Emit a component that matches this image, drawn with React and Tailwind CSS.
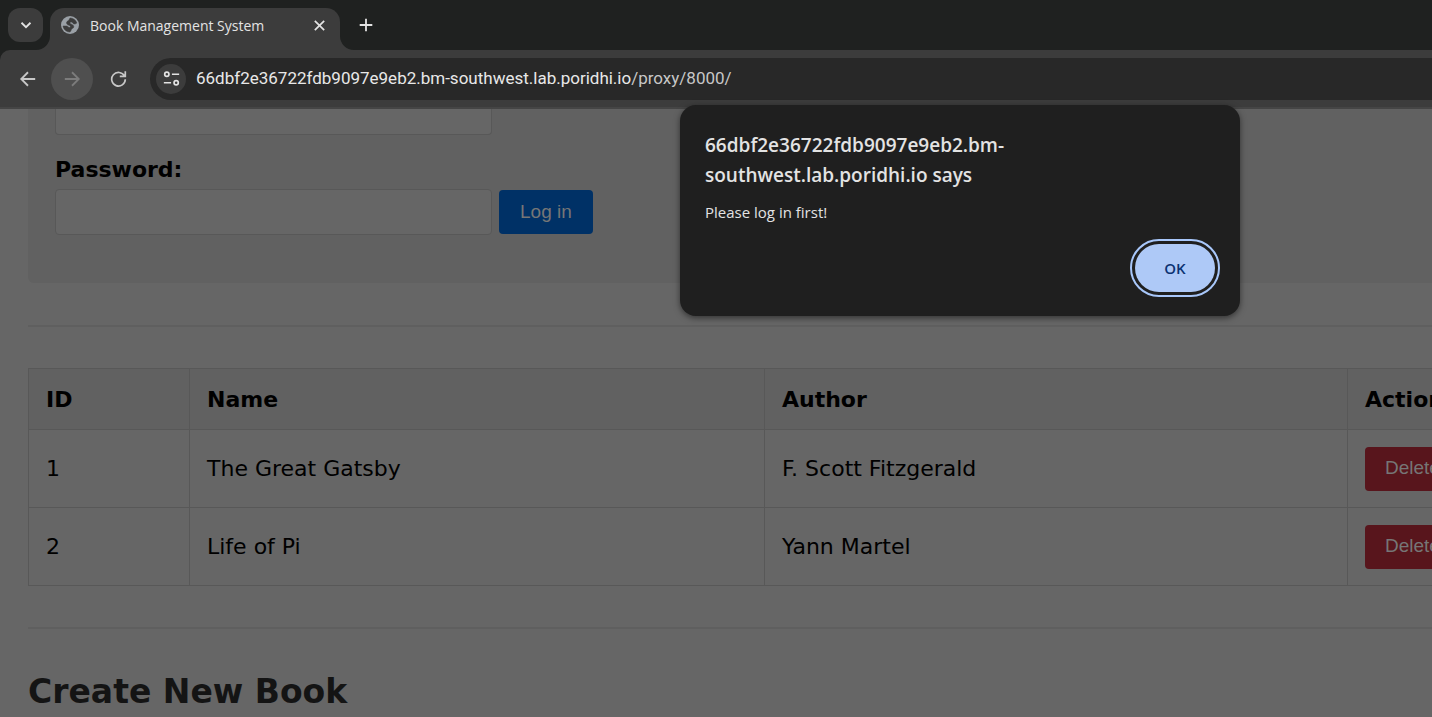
const books = [
  { id: 1, name: "The Great Gatsby", author: "F. Scott Fitzgerald" },
  { id: 2, name: "Life of Pi", author: "Yann Martel" },
];

function Stroke({ d, size = 20, className = "" }) {
  return (
    <svg width={size} height={size} viewBox="0 0 20 20" fill="none" stroke="currentColor" strokeWidth="2" className={className} aria-hidden="true">
      <path d={d} />
    </svg>
  );
}

function Globe() {
  return (
    <svg className="size-[18px]" viewBox="0 0 18 18" aria-hidden="true">
      <circle cx="9" cy="9" r="9" fill="#9aa0a6" />
      <g fill="#3c3c3c">
        <path d="M9.500 2C12.500 2.200 15 4.300 15.800 7C14.800 8 13.500 8.300 12.500 7.800C11.500 7.200 11.500 6 10.200 5.900C8.800 5.900 8.600 7.200 9.500 7.700C11 8.400 12.800 9 12.800 10.800C12.800 12.500 10.500 12.400 10.200 13.800C10 15 9.500 16 8.500 16C5.500 15.900 2.500 13.500 2 10H5.500C7 10 7.200 11.500 8.500 11.500C9.800 11.300 9.600 10 8.500 9.500C7 9 5.500 8.500 5.500 6.800C5.600 5 7.500 5 8 4C8.300 3.200 8.500 2.200 9.500 2z" stroke="#3c3c3c" strokeWidth="0.5" />
      </g>
    </svg>
  );
}

function TabStrip() {
  return (
    <div className="flex h-[50px] bg-[#1f2120] text-[#e3e3e3]">
      <button aria-label="Search tabs" className="mt-2 ml-2 flex h-[34px] w-[35px] items-center justify-center rounded-xl bg-[#3c3c3c]">
        <Stroke d="M5 7.500l5 5 5-5" size={18} />
      </button>
      <div className="relative mt-2 ml-[7px] flex w-[290px] items-center rounded-t-[14px] bg-[#3c3c3c] pr-3 pb-2 pl-[11px]">
        <svg className="absolute bottom-0 -left-3.5 size-3.5 text-[#3c3c3c]" viewBox="0 0 14 14" aria-hidden="true">
          <path d="M14 0v14H0A14 14 0 0 0 14 0z" fill="currentColor" />
        </svg>
        <svg className="absolute -right-3.5 bottom-0 size-3.5 text-[#3c3c3c]" viewBox="0 0 14 14" aria-hidden="true">
          <path d="M0 0v14h14A14 14 0 0 1 0 0z" fill="currentColor" />
        </svg>
        <Globe />
        <span className="ml-[11px] grow text-[14px] whitespace-nowrap">Book Management System</span>
        <button aria-label="Close tab">
          <Stroke d="M4.500 4.500l11 11M15.500 4.500l-11 11" size={17} />
        </button>
      </div>
      <button aria-label="New tab" className="ml-[17px] self-center">
        <Stroke d="M10 3v14M3 10h14" size={18} />
      </button>
    </div>
  );
}

function Toolbar() {
  return (
    <div className="bg-[#1f2120]">
      <div className="flex h-[59px] items-center rounded-tl-[10px] border-b-2 border-[#454545] bg-[#3c3c3c] pl-[7px] text-[#c7c7c7]">
        <button aria-label="Back" className="flex size-[42px] items-center justify-center">
          <Stroke d="M18 10H3M10 2.500L2.500 10l7.500 7.500" size={18} />
        </button>
        <button aria-label="Forward" className="ml-0.5 flex size-[42px] items-center justify-center rounded-full bg-[#4f4f4f] text-[#7c7c7c]">
          <Stroke d="M2 10h15M10 2.500l7.500 7.500-7.500 7.500" size={18} />
        </button>
        <button aria-label="Reload" className="ml-1 flex size-[42px] items-center justify-center">
          <Stroke d="M17 7A8 8 0 1 0 18 11M18 1.500V7.500H11.500" size={17} />
        </button>
        <div className="ml-[11px] flex h-[42px] grow items-center rounded-l-full bg-[#282828] pl-1.5">
          <button aria-label="Site information" className="flex size-[30px] items-center justify-center rounded-full bg-[#3c3c3c] text-[#e3e3e3]">
            <Stroke d="M10.500 5H19M1 15h8.500M4.500 2.500a2.500 2.500 0 1 0 0 5 2.500 2.500 0 1 0 0-5M15.500 12.500a2.500 2.500 0 1 0 0 5 2.500 2.500 0 1 0 0-5" size={17} />
          </button>
          <span className="ml-2.5 font-['Roboto',sans-serif] text-[17px] whitespace-nowrap text-[#e8e8e8]">
            66dbf2e36722fdb9097e9eb2.bm-southwest.lab.poridhi.io<span className="text-[#c7c7c7]">/proxy/8000/</span>
          </span>
        </div>
      </div>
    </div>
  );
}

function LoginForm() {
  return (
    <form className="rounded-bl-md bg-[#616161] pb-12 pl-[27px]" onSubmit={(e) => e.preventDefault()}>
      <input aria-label="Username" className="block h-[26px] w-[437px] rounded-b border border-t-0 border-[#585858] bg-[#666] px-3" />
      <label htmlFor="password" className="mt-5 block text-[22px] leading-[30px] font-bold">Password:</label>
      <div className="mt-1 flex items-center gap-[7px]">
        <input id="password" type="password" className="h-[46px] w-[437px] rounded border border-[#585858] bg-[#666] px-3" />
        <button className="h-11 rounded bg-[#003166] px-[21px] font-['Liberation_Sans',sans-serif] text-[19px] text-[#767676]">Log in</button>
      </div>
    </form>
  );
}

function BookTable() {
  const cell = "border border-[#585858] pl-[17px] text-left";
  return (
    <table className="w-[133%] table-fixed border-collapse text-[22px]">
      <colgroup>
        <col className="w-[161px]" />
        <col className="w-[575px]" />
        <col className="w-[583px]" />
        <col />
      </colgroup>
      <thead>
        <tr className="h-[61px] bg-[#616161]">
          {["ID", "Name", "Author", "Actions"].map((h) => (
            <th key={h} className={cell}>{h}</th>
          ))}
        </tr>
      </thead>
      <tbody>
        {books.map((b) => (
          <tr key={b.id} className="h-[78px]">
            <td className={cell}>{b.id}</td>
            <td className={cell}>{b.name}</td>
            <td className={cell}>{b.author}</td>
            <td className={cell}>
              <button className="block h-11 rounded bg-[#58151c] px-5 font-['Liberation_Sans',sans-serif] text-[19px] text-[#767676]">Delete</button>
            </td>
          </tr>
        ))}
      </tbody>
    </table>
  );
}

function AlertDialog() {
  return (
    <div role="alertdialog" aria-labelledby="alert-title" className="absolute top-[105px] left-[680px] w-[560px] rounded-2xl bg-[#1f1f1f] px-[25px] pt-[25px] pb-6 text-[#e3e3e3] shadow-[0_2px_6px_rgba(0,0,0,0.5)]">
      <h1 id="alert-title" className="w-[320px] text-[19px] leading-[30px] font-semibold">
        66dbf2e36722fdb9097e9eb2.bm-southwest.lab.poridhi.io says
      </h1>
      <p className="mt-[11px] text-[15px] leading-[22px]">Please log in first!</p>
      <div className="mt-[21px] flex justify-end">
        <button className="h-12 w-20 rounded-full bg-[#aec9f7] text-[15px] font-semibold text-[#0b3272] outline-2 outline-offset-[3px] outline-[#a8c7fa]">OK</button>
      </div>
    </div>
  );
}

export default function App() {
  return (
    <div className="relative h-screen overflow-hidden bg-[#666] font-['Open_Sans','Noto_Sans',sans-serif]">
      <TabStrip />
      <Toolbar />
      <main className="pl-7 font-['DejaVu_Sans',sans-serif] text-black">
        <LoginForm />
        <hr className="mt-[42px] border-t-2 border-[#5f5f5f]" />
        <div className="mt-[41px]">
          <BookTable />
        </div>
        <hr className="mt-[41px] border-t-2 border-[#5f5f5f]" />
        <h2 className="mt-[41px] text-[33px] leading-[44px] font-bold text-[#141414]">Create New Book</h2>
      </main>
      <AlertDialog />
    </div>
  );
}
